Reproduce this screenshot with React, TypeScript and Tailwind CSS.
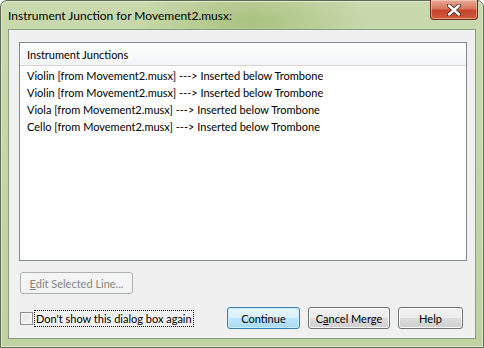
import React from "react";

const rows = [
  "Violin [from Movement2.musx] ---> Inserted below Trombone",
  "Violin [from Movement2.musx] ---> Inserted below Trombone",
  "Viola [from Movement2.musx] ---> Inserted below Trombone",
  "Cello [from Movement2.musx] ---> Inserted below Trombone",
];

const font = { fontFamily: 'Lato, "Noto Sans", sans-serif' };

function Btn({
  children,
  w,
  primary,
}: {
  children: React.ReactNode;
  w: string;
  primary?: boolean;
}) {
  return (
    <div
      className={`${w} h-[22px] rounded-[3px] border flex items-center justify-center text-[11px] text-black ${
        primary
          ? "border-[#3c7fb1] bg-[linear-gradient(#eaf6fd_0%,#d9f0fc_50%,#bee6fd_50%,#a7d9f5_100%)] shadow-[inset_0_0_0_1px_#c9edfc]"
          : "border-[#707070] bg-[linear-gradient(#f2f2f2_0%,#ebebeb_50%,#dddddd_50%,#cfcfcf_100%)] shadow-[inset_0_0_0_1px_#fcfcfc]"
      }`}
    >
      {children}
    </div>
  );
}

export default function App() {
  return (
    <div
      className="w-[484px] h-[348px] bg-white overflow-hidden leading-none"
      style={font}
    >
      <div className="relative w-[484px] h-[348px] rounded-t-[7px] border border-[#5e6b52] bg-[radial-gradient(ellipse_120px_40px_at_250px_20px,#a9c27f,transparent),linear-gradient(#c9d9ae,#bfd2a0)] flex flex-col shadow-[inset_0_0_0_1px_#dfe9cf]">
        {/* title bar */}
        <div className="h-[28px] flex items-start pl-[7px] pt-[7px]">
          <span className="text-[12px] leading-[16px] text-black">
            Instrument Junction for Movement2.musx:
          </span>
        </div>
        {/* close button */}
        <div className="absolute left-[429px] top-[-1px] w-[48px] h-[20px] rounded-b-[4px] border border-[#6b2a1c] border-t-0 bg-[linear-gradient(#e9a997_0%,#d8775e_45%,#c4452a_55%,#cf5a3a_100%)] shadow-[inset_0_0_0_1px_rgba(255,220,200,0.5)] flex items-center justify-center">
          <svg width="14" height="12" viewBox="0 0 14 12">
            <path
              d="M2 1.5 L12 10.5 M12 1.5 L2 10.5"
              stroke="#4a2a24"
              strokeWidth="4.2"
              strokeLinecap="round"
            />
            <path
              d="M2 1.5 L12 10.5 M12 1.5 L2 10.5"
              stroke="#ffffff"
              strokeWidth="2.4"
              strokeLinecap="round"
            />
          </svg>
        </div>
        {/* client */}
        <div className="ml-[7px] w-[468px] h-[310px] border border-[#8d9b80] bg-[#f0f0f0] flex flex-col pl-[10px] pt-[12px]">
          <div className="w-[448px] h-[219px] border border-[#828790] bg-white flex flex-col">
            <div className="h-[23px] border-b border-[#d5d5d5] bg-[linear-gradient(#ffffff,#f3f4f5)] flex items-center pl-[7px] text-[11px] text-black">
              Instrument Junctions
            </div>
            <div className="pt-[1px]">
              {rows.map((r, i) => (
                <div
                  key={i}
                  className="h-[17px] flex items-center pl-[7px] text-[11px] text-black whitespace-nowrap"
                >
                  {r}
                </div>
              ))}
            </div>
          </div>
          <div className="mt-[11px] ml-[1px] w-[113px] h-[22px] rounded-[3px] border border-[#adb2b5] bg-[#f4f4f4] flex items-center justify-center text-[11px] text-[#838383]">
            <span>
              <span className="underline">E</span>dit Selected Line...
            </span>
          </div>
          <div className="mt-[13px] h-[22px] flex items-center">
            <div className="ml-[1px] w-[13px] h-[13px] border border-[#8e8f8f] bg-[linear-gradient(135deg,#dcdcdc,#fbfbfb)] shadow-[inset_0_0_0_2px_#f4f4f4]" />
            <div className="ml-[1px] h-[17px] px-[1px] border border-dotted border-black flex items-center text-[11px] text-black whitespace-nowrap">
              Don't show this dialog box again
            </div>
            <div className="ml-auto mr-[12px] flex gap-[8px]">
              <Btn w="w-[73px]" primary>
                Continue
              </Btn>
              <Btn w="w-[82px]">
                <span>
                  C<span className="underline">a</span>ncel Merge
                </span>
              </Btn>
              <Btn w="w-[65px]">Help</Btn>
            </div>
          </div>
        </div>
      </div>
    </div>
  );
}
